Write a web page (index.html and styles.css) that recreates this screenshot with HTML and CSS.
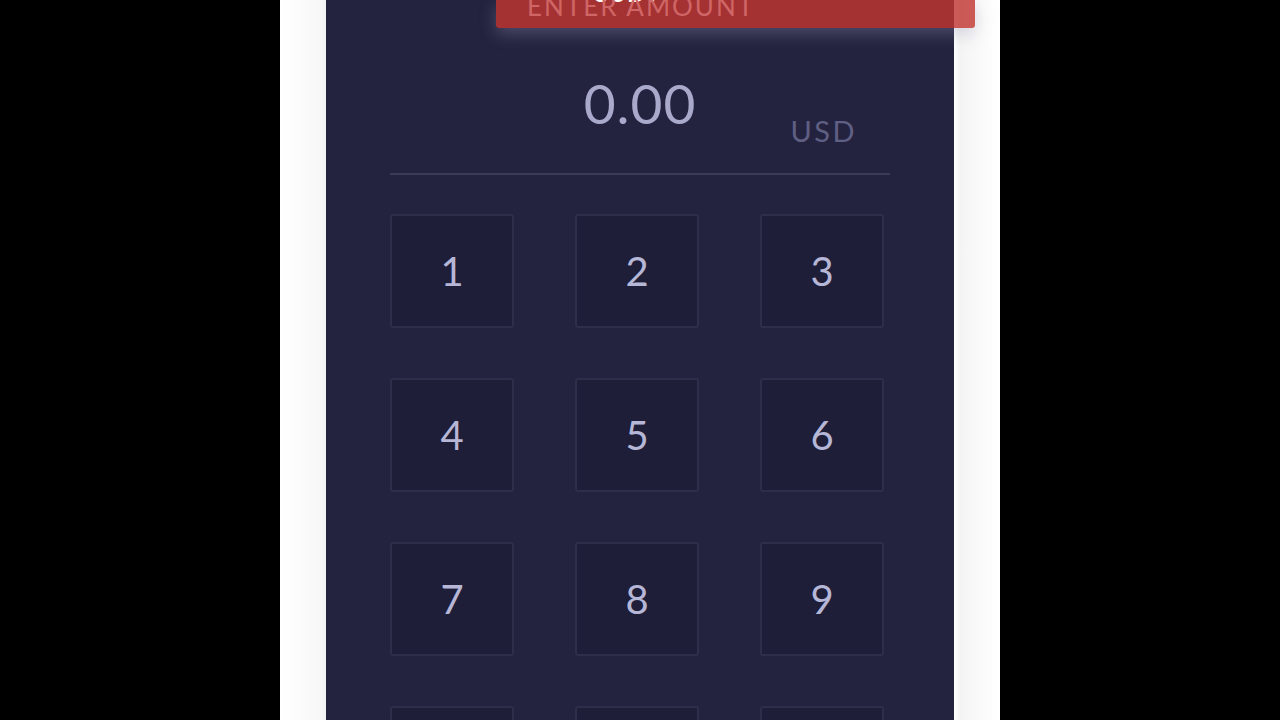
FILE: index.html
```html
<!DOCTYPE html>
<html lang="en">
<head>
<meta charset="utf-8">
<title>Enter amount</title>
<link rel="stylesheet" href="styles.css">
</head>
<body>
<div class="page">
  <div class="panel">
    <div class="banner">
      <span class="banner-top">USD?</span>
      <span class="banner-text">ENTER AMOUNT</span>
    </div>
    <div class="amount">
      <span class="value">0.00</span>
      <span class="currency">USD</span>
    </div>
    <div class="divider"></div>
    <div class="keypad-wrap">
      <div class="keypad">
        <button class="key">1</button>
        <button class="key">2</button>
        <button class="key">3</button>
        <button class="key">4</button>
        <button class="key">5</button>
        <button class="key">6</button>
        <button class="key">7</button>
        <button class="key">8</button>
        <button class="key">9</button>
        <button class="key"></button>
        <button class="key"></button>
        <button class="key"></button>
      </div>
    </div>
  </div>
</div>
</body>
</html>
```
FILE: styles.css
```css
html, body {
  margin: 0;
  padding: 0;
  background: #000;
  height: 720px;
  overflow: hidden;
  font-family: Lato, "Open Sans", sans-serif;
}
.page {
  width: 720px;
  height: 720px;
  margin: 0 auto;
  background: linear-gradient(to right, #ffffff 0, #f8f8f8 40px, #f2f2f2 46px, #ffffff 46px, #ffffff 674px, #f4f4f4 680px, #fafafa 700px, #ffffff 720px);
  display: flex;
  justify-content: center;
}
.panel {
  position: relative;
  width: 628px;
  height: 720px;
  background: #24233f;
  box-sizing: border-box;
  padding: 0 64px;
  display: flex;
  flex-direction: column;
}
.banner {
  position: absolute;
  left: 170px;
  top: 0;
  width: 479px;
  height: 28px;
  background: rgba(193, 54, 49, 0.82);
  border-radius: 0 0 3px 3px;
  box-shadow: 0 6px 16px rgba(150, 150, 180, 0.35);
  overflow: hidden;
  z-index: 2;
}
.banner-top {
  position: absolute;
  left: 96px;
  top: -22px;
  color: #ffffff;
  font-size: 24px;
  font-weight: 700;
  letter-spacing: 2px;
}
.banner-text {
  position: absolute;
  left: 31px;
  top: -9px;
  color: #cf6565;
  font-size: 26px;
  letter-spacing: 2px;
  line-height: 30px;
}
.amount {
  height: 173px;
  flex: 0 0 auto;
  box-sizing: border-box;
  padding-top: 70px;
  display: flex;
  justify-content: center;
  align-items: flex-start;
  position: relative;
}
.value {
  font-size: 55px;
  line-height: 66px;
  color: #a9a9cc;
  letter-spacing: 1px;
}
.currency {
  position: absolute;
  right: 33px;
  top: 113px;
  font-size: 29px;
  line-height: 36px;
  color: #5f5f84;
  letter-spacing: 2.5px;
}
.divider {
  width: 500px;
  height: 2px;
  flex: 0 0 auto;
  background: #3b3a58;
}
.keypad-wrap {
  flex: 1 1 auto;
  min-height: 0;
  overflow: hidden;
}
.keypad {
  margin-top: 39px;
  display: grid;
  grid-template-columns: repeat(3, 124px);
  grid-auto-rows: 114px;
  column-gap: 61px;
  row-gap: 50px;
}
.key {
  background: #1f1e39;
  border: 2px solid #2e2d4a;
  border-radius: 3px;
  color: #b6b6d6;
  font-family: Lato, "Open Sans", sans-serif;
  font-size: 40px;
  padding: 0;
  margin: 0;
  display: flex;
  align-items: center;
  justify-content: center;
}
```
